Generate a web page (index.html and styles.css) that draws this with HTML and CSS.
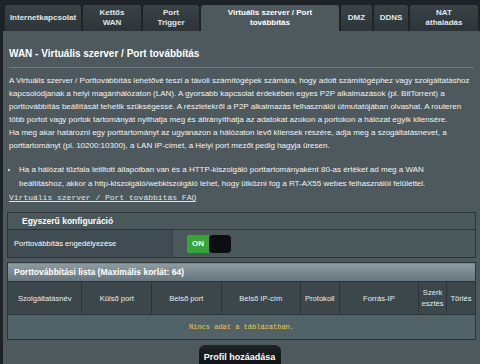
FILE: index.html
```html
<!DOCTYPE html>
<html lang="hu">

<head>
  <meta charset="UTF-8">
  <meta name="viewport" content="width=device-width, initial-scale=1.0">
  <title>WAN - Virtuális szerver / Port továbbítás</title>
  <link rel="stylesheet" href="styles.css">
</head>

<body>

  <div class="page">
    <!-- tab menu -->
    <ul class="tabs">
      <li class="tab tab-inet">Internetkapcsolat</li>
      <li class="tab tab-dual">Kettős<br>WAN</li>
      <li class="tab tab-trigger">Port<br>Trigger</li>
      <li class="tab tab-vs tab-active">Virtuális szerver / Port<br>továbbítás</li>
      <li class="tab tab-dmz">DMZ</li>
      <li class="tab tab-ddns">DDNS</li>
      <li class="tab tab-nat">NAT<br>áthaladás</li>
    </ul>

    <div class="panel">
      <h2 class="title">WAN - Virtuális szerver / Port továbbítás</h2>
      <div class="split-line"></div>

      <p class="desc">
        A Virtuális szerver / Porttovábbítás lehetővé teszi a távoli számítógépek számára, hogy adott számítógéphez vagy szolgáltatáshoz kapcsolódjanak a helyi magánhálózaton (LAN). A gyorsabb kapcsolat érdekében egyes P2P alkalmazások (pl. BitTorrent) a porttovábbítás beállítását tehetik szükségessé. A részletekről a P2P alkalmazás felhasználói útmutatójában olvashat. A routeren több portot vagy portok tartományát nyithatja meg és átirányíthatja az adatokat azokon a portokon a hálózat egyik kliensére.<br>
        Ha meg akar határozni egy porttartományt az ugyanazon a hálózaton levő kliensek részére, adja meg a szogáltatásnevet, a porttartományt (pl. 10200:10300), a LAN IP-címet, a Helyi port mezőt pedig hagyja üresen.
      </p>

      <ul class="notes">
        <li>Ha a hálózat tűzfala letiltott állapotban van és a HTTP-kiszolgáló porttartományaként 80-as értéket ad meg a WAN beállításhoz, akkor a http-kiszolgáló/webkiszolgáló lehet, hogy ütközni fog a RT-AX55 webes felhasználói felülettel.</li>
      </ul>

      <a class="faq" href="#">Virtuális szerver / Port továbbítás FAQ</a>

      <!-- basic config -->
      <table class="form-table">
        <thead>
          <tr>
            <td colspan="2">Egyszerű konfiguráció</td>
          </tr>
        </thead>
        <tbody>
          <tr>
            <th>Porttovábbítás engedélyezése</th>
            <td>
              <div class="switch">
                <span class="switch-on">ON</span>
                <span class="switch-knob"></span>
              </div>
            </td>
          </tr>
        </tbody>
      </table>

      <!-- rule list -->
      <table class="list-table">
        <thead>
          <tr>
            <td colspan="8">Porttovábbítási lista (Maximális korlát: 64)</td>
          </tr>
        </thead>
        <tbody>
          <tr class="list-head">
            <th class="col-name">Szolgáltatásnév</th>
            <th class="col-ext">Külső port</th>
            <th class="col-int">Belső port</th>
            <th class="col-ip">Belső IP-cím</th>
            <th class="col-proto">Protokoll</th>
            <th class="col-src">Forrás-IP</th>
            <th class="col-edit">Szerk<br>esztés</th>
            <th class="col-del">Törlés</th>
          </tr>
          <tr>
            <td colspan="8" class="no-data">Nincs adat a táblázatban.</td>
          </tr>
        </tbody>
      </table>

      <div class="apply">
        <button class="button-gen">Profil hozáadása</button>
      </div>
    </div>
  </div>

</body>

</html>
```

FILE: styles.css
```css
body {
  margin: 0;
  background: #1d2326;
  font-family: "Liberation Sans", Arial, sans-serif;
  color: #fff;
}

.page {
  padding-top: 5px;
  height: 359px;
  overflow: hidden;
}

/* tabs */
.tabs {
  display: flex;
  gap: 2px;
  list-style: none;
  margin: 0 0 0 5px;
  padding: 0;
}

.tab {
  height: 26px;
  display: flex;
  align-items: center;
  justify-content: center;
  text-align: center;
  font-size: 8px;
  font-weight: bold;
  line-height: 10px;
  color: #e2e6e8;
  background: linear-gradient(#3a4347, #2c3438);
  border-radius: 3px 3px 0 0;
}

.tab-active {
  background: #4d595d;
  color: #fff;
}

.tab-inet { width: 76px; }
.tab-dual { width: 58px; }
.tab-trigger { width: 56px; }
.tab-vs { width: 138px; }
.tab-dmz { width: 31px; }
.tab-ddns { width: 34px; }
.tab-nat { width: 68px; }

/* main panel */
.panel {
  margin-left: 3px;
  background: #4d595d;
  padding: 16px 4px 40px;
}

.title {
  margin: 0 2px;
  font-size: 10px;
  line-height: 13px;
  font-weight: bold;
}

.split-line {
  height: 1px;
  margin: 7px 2px 0;
  background: #6e7d82;
}

.desc {
  margin: 6px 0 0 2px;
  font-size: 8px;
  line-height: 13px;
  color: #f2f4f4;
}

.notes {
  margin: 11px 20px 0 2px;
  padding-left: 10px;
  font-size: 8px;
  line-height: 14px;
  color: #f2f4f4;
}

.faq {
  display: block;
  margin: 0 2px;
  font-family: "Liberation Mono", "Courier New", monospace;
  font-size: 8px;
  line-height: 13px;
  color: #dfe4e6;
}

/* tables */
.form-table,
.list-table {
  width: 100%;
  border-collapse: collapse;
  border: 1px solid #2b3437;
}

.form-table {
  margin-top: 8px;
}

.list-table {
  margin-top: 4px;
}

thead td {
  height: 16px;
  padding: 0 6px;
  text-align: left;
  font-size: 8.5px;
  font-weight: bold;
  background: linear-gradient(#8e9ca1, #66757c);
  border-bottom: 1px solid #2b3437;
}

.list-table thead td {
  height: 18px;
}

.form-table th {
  width: 152px;
  height: 27px;
  padding: 0 6px;
  text-align: left;
  font-size: 7.6px;
  font-weight: normal;
  background: #404c51;
  border-right: 1px solid #38444a;
}

.form-table td {
  padding: 0 14px;
  background: #4a575b;
}

.switch {
  display: flex;
  width: 44px;
  height: 18px;
}

.switch-on {
  width: 22px;
  display: flex;
  align-items: center;
  justify-content: center;
  font-size: 8px;
  font-weight: bold;
  background: #35a534;
  border-radius: 2px 0 0 2px;
}

.switch-knob {
  width: 22px;
  background: #0c0e0f;
  border-radius: 4px;
}

.list-head th {
  height: 32px;
  padding: 0 2px;
  font-size: 7.6px;
  font-weight: normal;
  line-height: 11px;
  color: #e8ecee;
  background: #3b474b;
  border-right: 1px solid #2b3437;
}

.col-name { width: 70px; }
.col-ext { width: 66px; }
.col-int { width: 66px; }
.col-ip { width: 76px; }
.col-proto { width: 34px; }
.col-src { width: 76px; }
.col-edit { width: 23px; }
.col-del { width: 24px; }

.no-data {
  height: 22px;
  text-align: center;
  font-family: "Liberation Mono", "Courier New", monospace;
  font-size: 7px;
  color: #f2c935;
  background: #516368;
  border-top: 1px solid #2b3437;
}

.apply {
  display: flex;
  justify-content: center;
  margin-top: 5px;
  padding-right: 4px;
}

.button-gen {
  width: 82px;
  height: 24px;
  padding: 0;
  border: none;
  border-radius: 6px;
  white-space: nowrap;
  font-family: "Liberation Sans", Arial, sans-serif;
  font-size: 9px;
  font-weight: bold;
  color: #fff;
  background: linear-gradient(#1f2527, #0b0e0f);
  cursor: pointer;
}
```
